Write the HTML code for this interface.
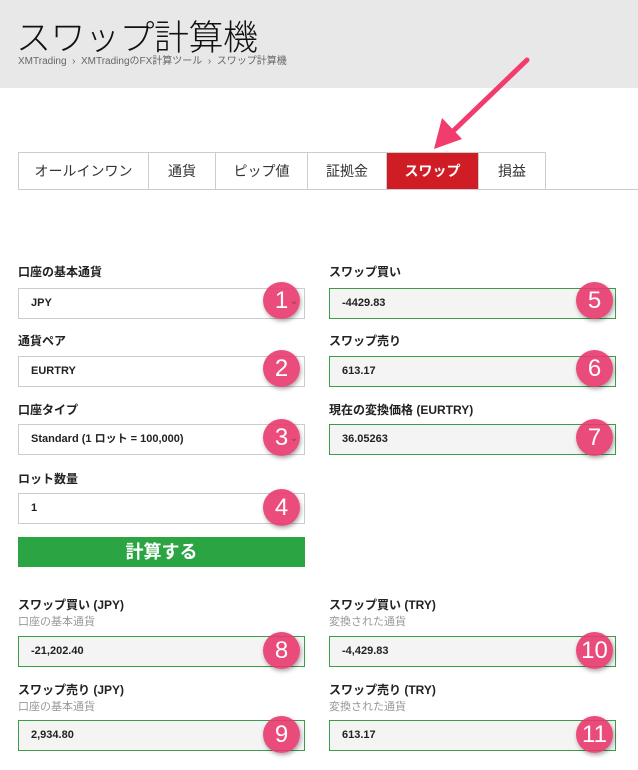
<!DOCTYPE html>
<html><head><meta charset="utf-8"><style>
*{box-sizing:border-box;margin:0;padding:0}
body{width:638px;height:770px;background:#fff;font-family:"Liberation Sans","Noto Sans CJK JP",sans-serif;position:relative;overflow:hidden;color:#222}
.hdr{position:absolute;left:0;top:0;width:638px;height:88px;background:#e8e8e8}
.title{position:absolute;left:16px;top:10px;font-size:35px;font-weight:300;color:#111;letter-spacing:-0.5px}
.bc{position:absolute;left:18px;top:52px;font-size:10px;color:#666}
.tabs{position:absolute;left:18px;top:152px;height:38px;display:flex;border:1px solid #ccc;border-bottom:none}
.tabs div{height:37px;line-height:37px;text-align:center;font-size:14px;border-right:1px solid #ccc;color:#333}
.tabs div:last-child{border-right:none}
.tabs .act{background:#d01d25;color:#fff;font-weight:bold}
.line{position:absolute;left:18px;top:189px;width:620px;height:1px;background:#ccc}
.lb{position:absolute;font-size:12px;color:#222;font-weight:bold}
.sub{position:absolute;font-size:11px;color:#999}
.in{position:absolute;width:287px;height:31px;border:1px solid #ccc;background:#fff;font-size:11px;font-weight:bold;padding-left:12px;line-height:29px}
.g{border-color:#3a9e47;background:#f4f4f4}
.btn{position:absolute;left:18px;top:537px;width:287px;height:30px;background:#2ba544;color:#fff;font-size:18px;font-weight:bold;text-align:center;line-height:30px}
.c{position:absolute;width:37px;height:37px;border-radius:50%;background:rgba(232,56,110,.9);box-shadow:1px 2px 4px rgba(0,0,0,.35);color:#fff;font-size:24px;text-align:center;line-height:37px;font-family:"Liberation Sans Narrow","Liberation Sans",sans-serif}
.chev{position:absolute;font-size:10px;color:#a33}
</style></head><body>
<div class="hdr"></div>
<div class="title">スワップ計算機</div>
<div class="bc">XMTrading &nbsp;›&nbsp; XMTradingのFX計算ツール &nbsp;›&nbsp; スワップ計算機</div>
<svg style="position:absolute;left:0;top:0" width="638" height="200"><line x1="527" y1="60" x2="448" y2="136" stroke="#f23b6f" stroke-width="5" stroke-linecap="round"/><polygon points="434,149 442,118 462,139" fill="#f23b6f"/></svg>
<div class="tabs"><div style="width:130px">オールインワン</div><div style="width:67px">通貨</div><div style="width:92px">ピップ値</div><div style="width:79px">証拠金</div><div class="act" style="width:92px">スワップ</div><div style="width:66px">損益</div></div>
<div class="line"></div>

<div class="lb" style="left:18px;top:263px">口座の基本通貨</div>
<div class="in" style="left:18px;top:288px">JPY</div>
<div class="lb" style="left:18px;top:332px">通貨ペア</div>
<div class="in" style="left:18px;top:356px">EURTRY</div>
<div class="lb" style="left:18px;top:401px">口座タイプ</div>
<div class="in" style="left:18px;top:424px">Standard (1 ロット = 100,000)</div>
<div class="lb" style="left:18px;top:470px">ロット数量</div>
<div class="in" style="left:18px;top:493px">1</div>
<div class="btn">計算する</div>

<div class="lb" style="left:329px;top:263px">スワップ買い</div>
<div class="in g" style="left:329px;top:288px">-4429.83</div>
<div class="lb" style="left:329px;top:332px">スワップ売り</div>
<div class="in g" style="left:329px;top:356px">613.17</div>
<div class="lb" style="left:329px;top:401px">現在の変換価格 (EURTRY)</div>
<div class="in g" style="left:329px;top:424px">36.05263</div>

<div class="lb" style="left:18px;top:596px">スワップ買い (JPY)</div>
<div class="sub" style="left:18px;top:613px">口座の基本通貨</div>
<div class="in g" style="left:18px;top:636px">-21,202.40</div>
<div class="lb" style="left:18px;top:681px">スワップ売り (JPY)</div>
<div class="sub" style="left:18px;top:698px">口座の基本通貨</div>
<div class="in g" style="left:18px;top:720px">2,934.80</div>
<div class="lb" style="left:329px;top:596px">スワップ買い (TRY)</div>
<div class="sub" style="left:329px;top:613px">変換された通貨</div>
<div class="in g" style="left:329px;top:636px">-4,429.83</div>
<div class="lb" style="left:329px;top:681px">スワップ売り (TRY)</div>
<div class="sub" style="left:329px;top:698px">変換された通貨</div>
<div class="in g" style="left:329px;top:720px">613.17</div>

<div class="c" style="left:263px;top:282px">1</div><div class="chev" style="left:290px;top:296px">⌄</div>
<div class="c" style="left:263px;top:350px">2</div>
<div class="c" style="left:263px;top:419px">3</div><div class="chev" style="left:290px;top:433px">⌄</div>
<div class="c" style="left:263px;top:489px">4</div>
<div class="c" style="left:576px;top:282px">5</div>
<div class="c" style="left:576px;top:350px">6</div>
<div class="c" style="left:576px;top:419px">7</div>
<div class="c" style="left:263px;top:632px">8</div>
<div class="c" style="left:263px;top:716px">9</div>
<div class="c" style="left:576px;top:632px">10</div>
<div class="c" style="left:576px;top:716px">11</div>
</body></html>
